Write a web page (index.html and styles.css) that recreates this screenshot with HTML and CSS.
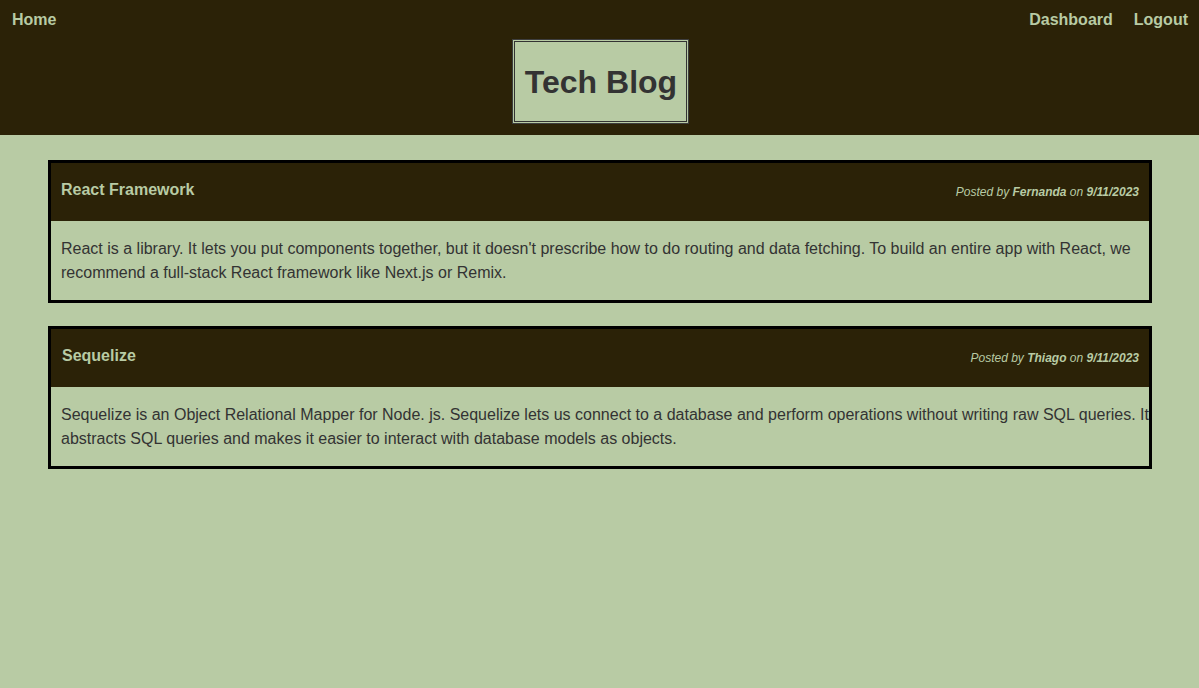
FILE: index.html
```html
<!DOCTYPE html>
<html>
<head>
<meta charset="utf-8">
<title>Tech Blog</title>
<link rel="stylesheet" href="styles.css">
</head>
<body>
<header class="site-header">
  <nav class="nav">
    <a class="nav-link" href="#">Home</a>
    <div class="nav-right">
      <a class="nav-link" href="#">Dashboard</a>
      <a class="nav-link" href="#">Logout</a>
    </div>
  </nav>
  <div class="brand-wrap">
    <h1 class="brand">Tech Blog</h1>
  </div>
</header>
<main class="posts">
  <article class="post">
    <div class="post-head">
      <h2 class="post-title">React Framework</h2>
      <p class="post-meta">Posted by <b>Fernanda</b> on <b>9/11/2023</b></p>
    </div>
    <div class="post-body">React is a library. It lets you put components together, but it doesn't prescribe how to do routing and data fetching. To build an entire app with React, we recommend a full-stack React framework like Next.js or Remix.</div>
  </article>
  <article class="post">
    <div class="post-head">
      <h2 class="post-title post-title-alt">Sequelize</h2>
      <p class="post-meta">Posted by <b>Thiago</b> on <b>9/11/2023</b></p>
    </div>
    <div class="post-body">Sequelize is an Object Relational Mapper for Node. js. Sequelize lets us connect to a database and perform operations without writing raw SQL queries. It abstracts SQL queries and makes it easier to interact with database models as objects.</div>
  </article>
</main>
</body>
</html>
```
FILE: styles.css
```css
html, body {
  margin: 0;
  padding: 0;
}
body {
  background: #b8cba4;
  font-family: "Liberation Sans", Arial, sans-serif;
  color: #333333;
  min-height: 688px;
}
.site-header {
  background: #2b2207;
  height: 135px;
  box-sizing: border-box;
  padding-top: 10px;
}
.nav {
  display: flex;
  justify-content: space-between;
  align-items: center;
  padding: 0 11px 0 12px;
  height: 20px;
}
.nav-right {
  display: flex;
  gap: 21px;
}
.nav-link {
  color: #b8cba4;
  font-weight: bold;
  font-size: 16px;
  text-decoration: none;
}
.brand-wrap {
  display: flex;
  justify-content: center;
  margin-top: 9px;
}
.brand {
  margin: 0 0 0 1px;
  background: #b8cba4;
  color: #333333;
  font-size: 32px;
  font-weight: bold;
  width: 177px;
  height: 85px;
  box-sizing: border-box;
  display: flex;
  align-items: center;
  justify-content: center;
  border: 1px solid #3d3d3d;
  box-shadow: inset 0 0 0 1px #b8cba4, inset 0 0 0 2px #333333;
  padding: 1px 0 0 2px;
}
.posts {
  padding: 25px 47px 0 48px;
  display: flex;
  flex-direction: column;
  gap: 23px;
}
.post {
  border: 3px solid #000000;
}
.post-head {
  background: #2b2207;
  height: 58px;
  box-sizing: border-box;
  display: flex;
  justify-content: space-between;
  align-items: flex-start;
  padding: 18px 10px 0 10px;
  color: #b8cba4;
}
.post-title {
  margin: 0;
  font-size: 16px;
  font-weight: bold;
}
.post-title-alt {
  padding-left: 1px;
}
.post-meta {
  margin: 4px 0 0 0;
  font-size: 12px;
  font-style: italic;
}
.post-body {
  padding: 16px 0 15px 10px;
  font-size: 16px;
  line-height: 24px;
  color: #333333;
}
```
